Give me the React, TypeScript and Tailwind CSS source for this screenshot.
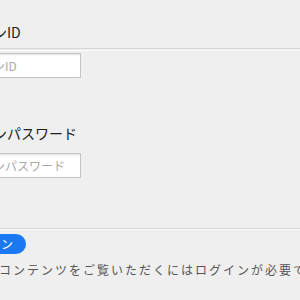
export default function App() {
  return (
    <main
      className="w-[300px] h-[300px] overflow-hidden bg-[#efefef] text-[#222]"
      style={{ fontFamily: '"Noto Sans CJK JP", "Noto Sans", sans-serif' }}
    >
      {/* content column sits partly off the left edge */}
      <div className="-ml-[50px] w-[400px] flex flex-col">
        {/* ── login id ── */}
        <div className="pt-[22px] h-[42px] text-sm leading-5 pl-px">ログインID</div>
        <div className="mt-[6px] h-px bg-[#d6d6d6]" />
        <div className="mt-px h-px bg-[#fafafa]" />
        <input
          className="mt-[2px] w-[131px] h-[25px] border border-[#c4c4c4] bg-white px-[6px] text-xs shadow-[inset_1px_1px_2px_rgba(0,0,0,0.12)] placeholder:text-[#aaa] outline-none"
          placeholder="ログインID"
        />

        {/* ── password ── */}
        <div className="mt-[45px] h-5 text-sm leading-5 pl-px">ログインパスワード</div>
        <input
          type="password"
          className="mt-[10px] w-[131px] h-[25px] border border-[#c4c4c4] bg-white px-[6px] text-xs shadow-[inset_1px_1px_2px_rgba(0,0,0,0.12)] placeholder:text-[#aaa] outline-none"
          placeholder="ログインパスワード"
        />

        <div className="mt-[50px] h-px bg-[#d6d6d6]" />
        <div className="h-px bg-[#fafafa]" />

        {/* ── submit ── */}
        <div className="mt-[4px] flex">
          <button className="h-[20px] w-[76px] rounded-full bg-[#1a78f2] text-white text-xs leading-5 tracking-[1px]">
            ログイン
          </button>
        </div>
        <p className="mt-[8px] pl-[21px] text-xs leading-4 tracking-[2px] text-[#555] whitespace-nowrap">
          このコンテンツをご覧いただくにはログインが必要です。
        </p>
      </div>
    </main>
  )
}
